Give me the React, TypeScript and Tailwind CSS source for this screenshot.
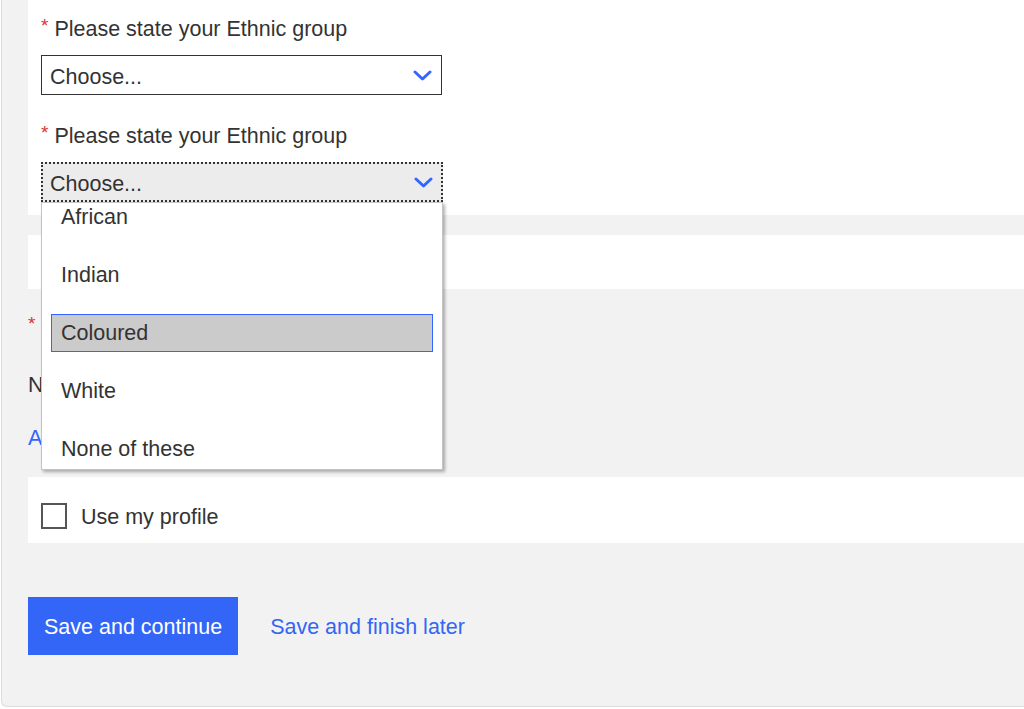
const options = ["African", "Indian", "Coloured", "White", "None of these"]

function Chevron() {
  return (
    <svg width="19" height="11" viewBox="0 0 19 11" className="shrink-0">
      <polyline points="2,2 9.5,9 17,2" fill="none" stroke="#3366ff" strokeWidth="3" strokeLinecap="round" strokeLinejoin="round" />
    </svg>
  )
}

function Required() {
  return <span className="text-[#d33] text-[19px] leading-[22px] mr-[6px]">*</span>
}

function Label({ children }: { children: React.ReactNode }) {
  return (
    <div className="flex items-start h-[28px] leading-[28px] text-[21.5px] text-[#333]">
      <Required />
      {children}
    </div>
  )
}

export default function App() {
  return (
    <div className="min-h-[709px] bg-white font-['Liberation_Sans',Arial,sans-serif]">
      <div className="relative h-[707px] ml-px border-l border-b border-[#dcdcdc] rounded-bl-[6px] bg-[#f2f2f2] pl-[26px] overflow-hidden">
        {/* ethnic group */}
        <div className="bg-white pl-[13px] pt-[15px] pb-[13px]">
          <Label>Please state your Ethnic group</Label>
          <div className="mt-[12px] w-[401px] h-[40px] border border-[#333] bg-white flex items-center justify-between pl-[8px] pr-[9px]">
            <span className="text-[21.5px] leading-[28px] text-[#333] mt-[4px]">Choose...</span>
            <Chevron />
          </div>

          <div className="mt-[27px]">
            <Label>Please state your Ethnic group</Label>
          </div>
          <div className="mt-[12px] w-[402px] h-[40px] border-2 border-dotted border-[#333] bg-[#ececec] flex items-center justify-between pl-[7px] pr-[8px]">
            <span className="text-[21.5px] leading-[28px] text-[#333] mt-[4px]">Choose...</span>
            <Chevron />
          </div>
        </div>

        <div className="h-[20px]" />
        <div className="bg-white h-[54px]" />

        {/* field mostly hidden by the open list */}
        <div className="h-[188px] pt-[24px] text-[21.5px] leading-[28px] text-[#333]">
          <div className="flex items-start">
            <Required />
            ID
          </div>
          <div className="mt-[30px]">No</div>
          <div className="mt-[25px] text-[#3366ff]">Add</div>
        </div>

        <div className="bg-white h-[66px] pl-[13px] pt-[12px] flex items-center gap-[14px]">
          <div className="w-[26px] h-[26px] border-2 border-[#555] bg-white" />
          <span className="text-[21.5px] text-[#333] mt-[2px]">Use my profile</span>
        </div>

        <div className="pt-[54px] flex items-center gap-[32px]">
          <button className="h-[58px] px-[16px] pt-[3px] bg-[#3366f6] text-white text-[21.5px]">Save and continue</button>
          <a className="text-[21.5px] text-[#3366f2] mt-[3px]">Save and finish later</a>
        </div>

        {/* open option list */}
        <div className="absolute left-[39px] top-[202px] w-[402px] h-[268px] bg-white border border-[#c4c4c4] shadow-[2px_2px_3px_rgba(0,0,0,0.3)] overflow-hidden">
          <div className="-mt-[5px] px-[9px] flex flex-col gap-[20px]">
            {options.map(o => (
              <div
                key={o}
                className={`h-[38px] flex items-center pl-[9px] text-[21.5px] text-[#333] border ${o === "Coloured" ? "bg-[#cbcbcb] border-[#3366ff]" : "border-transparent"}`}
              >
                {o}
              </div>
            ))}
          </div>
        </div>
      </div>
    </div>
  )
}
